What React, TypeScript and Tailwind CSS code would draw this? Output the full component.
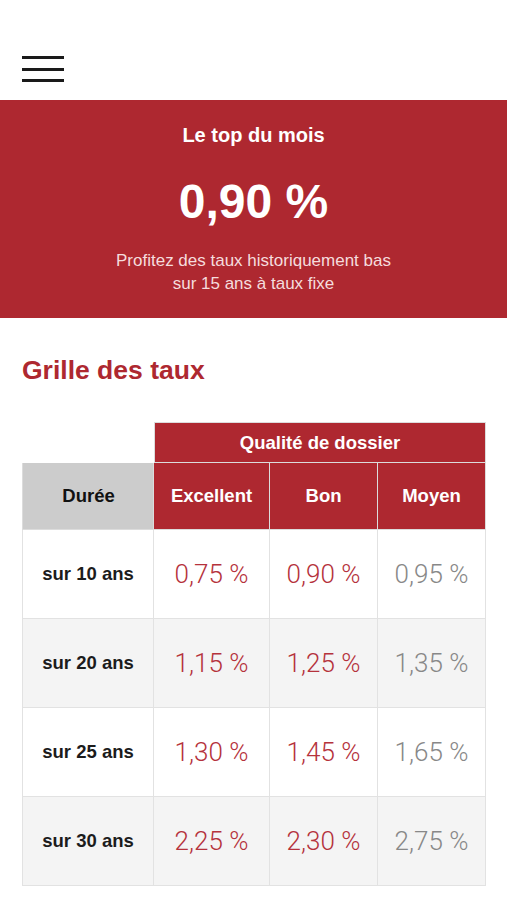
const ROWS = [
    { label: "sur 10 ans", values: ["0,75 %", "0,90 %", "0,95 %"] },
    { label: "sur 20 ans", values: ["1,15 %", "1,25 %", "1,35 %"] },
    { label: "sur 25 ans", values: ["1,30 %", "1,45 %", "1,65 %"] },
    { label: "sur 30 ans", values: ["2,25 %", "2,30 %", "2,75 %"] },
];

function App() {
    return (
        <div className="w-[507px] min-h-[900px] bg-white font-['Liberation_Sans',Arial,sans-serif]">
            <div className="h-[100px] px-[22px] pt-[56px]">
                <button className="flex flex-col gap-[8.5px] w-[42px]">
                    <span className="block h-[3px] bg-[#1a1a1a]"></span>
                    <span className="block h-[3px] bg-[#1a1a1a]"></span>
                    <span className="block h-[3px] bg-[#1a1a1a]"></span>
                </button>
            </div>

            <div className="h-[218px] bg-[#ae2830] text-white text-center flex flex-col items-center pt-[23px]">
                <h2 className="text-[20px] font-bold leading-[24px]">Le top du mois</h2>
                <div className="mt-[27px] text-[48px] font-bold leading-[56px]">0,90 %</div>
                <p className="mt-[19px] text-[17px] leading-[23px] text-[#f5dcdd]">
                    Profitez des taux historiquement bas<br />sur 15 ans à taux fixe
                </p>
            </div>

            <h1 className="mt-[36px] ml-[22px] text-[26.5px] font-bold text-[#ae2830] leading-[32px]">Grille des taux</h1>

            <div className="mt-[36px] ml-[22px] grid grid-cols-[132px_116px_108px_108px]">
                <div className="h-[41px]"></div>
                <div className="col-span-3 h-[41px] bg-[#ae2830] border border-[#dcdcdc] flex items-center justify-center text-white font-bold text-[18.5px]">
                    Qualité de dossier
                </div>

                <div className="h-[67px] bg-[#cccccc] border-l border-b border-[#dcdcdc] flex items-center justify-center font-bold text-[18.5px] text-[#111]">
                    Durée
                </div>
                {["Excellent", "Bon", "Moyen"].map((h) => (
                    <div key={h} className="h-[67px] bg-[#ae2830] border-r border-l border-b border-[#dcdcdc] -ml-px first:ml-0 flex items-center justify-center text-white font-bold text-[18.5px]">
                        {h}
                    </div>
                ))}

                {ROWS.map((row, i) => (
                    <div key={row.label} className="contents">
                        <div className={`h-[89px] border-l border-r border-b border-[#e2e2e2] flex items-center justify-center font-bold text-[18.5px] text-[#1c1c1c] ${i % 2 ? "bg-[#f4f4f4]" : "bg-white"}`}>
                            {row.label}
                        </div>
                        {row.values.map((v, j) => (
                            <div
                                key={j}
                                className={`h-[89px] border-r border-b border-[#e2e2e2] flex items-center justify-center font-['Roboto',sans-serif] font-light text-[26px] ${i % 2 ? "bg-[#f4f4f4]" : "bg-white"} ${j === 2 ? "text-[#888888]" : "text-[#b5323c]"}`}
                            >
                                {v}
                            </div>
                        ))}
                    </div>
                ))}
            </div>
        </div>
    );
}

export default App;
